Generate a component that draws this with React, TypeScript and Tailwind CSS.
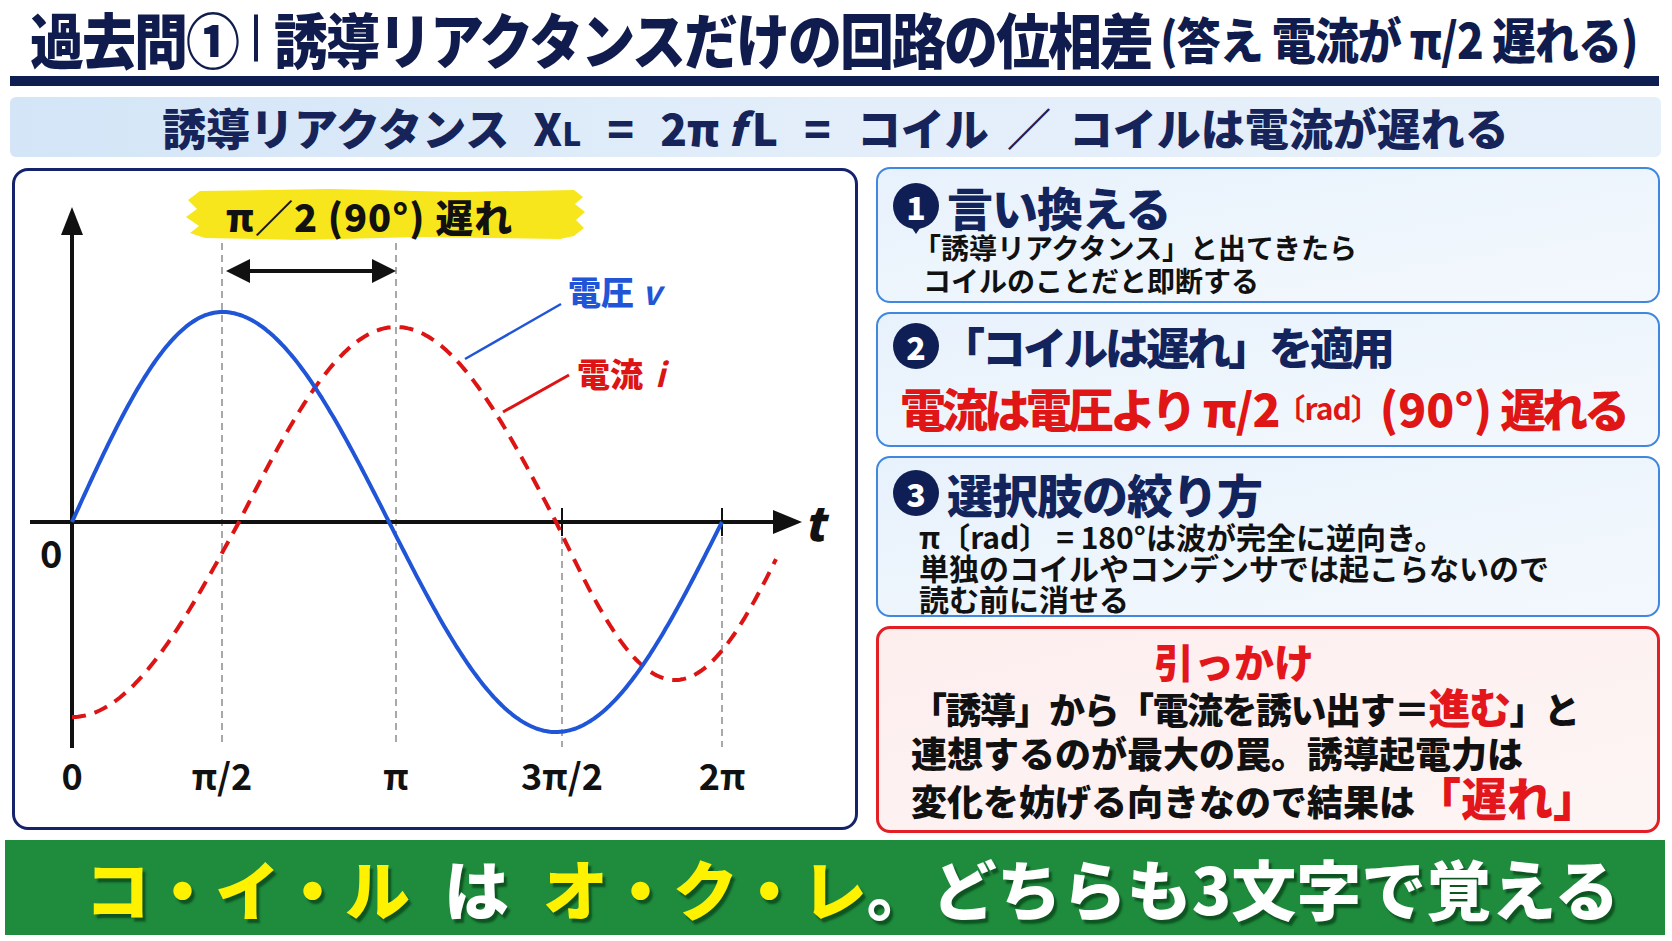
import React from 'react';

const BLUE_KEYS = [72, 222, 389, 556, 722];
const RED_KEYS = [72, 239, 396, 556, 675];
const AXIS_Y = 521;

// x -> phase, piecewise linear between quarter-period key points
const phaseAt = (x: number, keys: number[], phase0: number) => {
  let i = 0;
  while (i < keys.length - 2 && x > keys[i + 1]) i++;
  return phase0 + (i + (x - keys[i]) / (keys[i + 1] - keys[i])) * (Math.PI / 2);
};

const wavePath = (
  keys: number[],
  phase0: number,
  xStart: number,
  xEnd: number,
  amp: (p: number) => number,
) => {
  const pts: string[] = [];
  for (let x = xStart; x <= xEnd; x += 2) {
    const p = phaseAt(x, keys, phase0);
    const y = AXIS_Y - amp(p) * Math.sin(p);
    pts.push(`${x.toFixed(1)},${y.toFixed(1)}`);
  }
  return 'M' + pts.join(' L');
};

const bluePath = wavePath(BLUE_KEYS, 0, 72, 722, () => 210);
const redPath = wavePath(RED_KEYS, -Math.PI / 2, 72, 776, (p) => (p < Math.PI ? 195 : 158));

const Chart = () => (
  <svg viewBox="15 170 840 656" className="block w-full h-full">
    {/* brush highlight */}
    <path
      d="M200,190 L330,188 L460,191 L574,189 L583,196 L575,203 L585,211 L576,219 L584,227 L574,235 L560,238 L420,236 L300,239 L205,237 L190,232 L199,225 L186,216 L197,208 L188,199 Z"
      fill="#f7e61b"
    />
    <text x="226" y="231" fontSize="38" fontWeight="900" fill="#111" letterSpacing="1">
      π／2 (90°) 遅れ
    </text>

    {/* guide lines */}
    <g stroke="#a8a8a8" strokeWidth="2" strokeDasharray="7 5">
      <line x1="222" y1="242" x2="222" y2="746" />
      <line x1="396" y1="242" x2="396" y2="746" />
      <line x1="562" y1="524" x2="562" y2="746" />
      <line x1="722" y1="524" x2="722" y2="746" />
    </g>

    {/* phase difference arrow */}
    <line x1="244" y1="270" x2="378" y2="270" stroke="#111" strokeWidth="4" />
    <polygon points="226,270 250,258 250,282" fill="#111" />
    <polygon points="396,270 372,258 372,282" fill="#111" />

    {/* axes */}
    <line x1="72" y1="747" x2="72" y2="228" stroke="#111" strokeWidth="4" />
    <polygon points="72,206 61,234 83,234" fill="#111" />
    <line x1="30" y1={AXIS_Y} x2="780" y2={AXIS_Y} stroke="#111" strokeWidth="4" />
    <polygon points="802,521 773,509 773,533" fill="#111" />
    <line x1="562" y1="507" x2="562" y2="535" stroke="#111" strokeWidth="2" />
    <line x1="722" y1="507" x2="722" y2="535" stroke="#111" strokeWidth="2" />

    {/* waves */}
    <path d={redPath} fill="none" stroke="#dc1414" strokeWidth="4" strokeDasharray="14 9" />
    <path d={bluePath} fill="none" stroke="#1f55d6" strokeWidth="4" strokeLinejoin="round" />

    {/* leaders + labels */}
    <line x1="561" y1="303" x2="465" y2="358" stroke="#1f55d6" strokeWidth="2.5" />
    <line x1="569" y1="374" x2="503" y2="411" stroke="#dc1414" strokeWidth="3" />
    <text x="568" y="304" fontSize="33" fontWeight="900" fill="#1f55d6">
      電圧<tspan dx="8" fontStyle="italic" fontWeight="700">v</tspan>
    </text>
    <text x="577" y="386" fontSize="33" fontWeight="900" fill="#dc1414">
      電流<tspan dx="12" fontStyle="italic" fontWeight="700">i</tspan>
    </text>

    <text x="804" y="540" fontSize="46" fontWeight="900" fontStyle="italic" fill="#111">
      t
    </text>
    <text x="40" y="567" fontSize="38" fontWeight="700" fill="#111">
      0
    </text>

    <g fontSize="36" fontWeight="700" fill="#111" textAnchor="middle">
      <text x="72" y="789">0</text>
      <text x="222" y="789">π/2</text>
      <text x="396" y="789">π</text>
      <text x="562" y="789">3π/2</text>
      <text x="722" y="789">2π</text>
    </g>
  </svg>
);

const NumBadge = ({ n, tail = false }: { n: string; tail?: boolean }) => (
  <div className="relative flex items-center justify-center w-[46px] h-[46px] shrink-0 rounded-full bg-[#0f1f55] text-white text-[32px] font-black leading-none">
    {n}
    {tail && (
      <span className="absolute left-1/2 -translate-x-1/2 top-[42px] w-0 h-0 border-l-[6px] border-r-[6px] border-t-[9px] border-l-transparent border-r-transparent border-t-[#0f1f55]" />
    )}
  </div>
);

export default function App() {
  return (
    <div className="w-[1672px] h-[941px] bg-white overflow-hidden font-['Noto_Sans_CJK_JP','Noto_Sans',sans-serif] text-[#111]">
      {/* title */}
      <div className="h-[76px] flex items-center pl-[30px] text-[#0f1c4d] font-black whitespace-nowrap scale-y-[1.12] origin-center">
        <span className="text-[54px] tracking-[-2px] leading-[1.1]">過去問①</span>
        <span className="w-[4px] h-[42px] bg-[#0f1c4d] mx-[16px]" />
        <span className="text-[54px] tracking-[-2px] leading-[1.1]">誘導リアクタンスだけの回路の位相差</span>
        <span className="text-[44px] tracking-[-1px] leading-[1.1] ml-[8px]">(答え 電流が π/2 遅れる)</span>
      </div>
      <div className="h-[10px] ml-[10px] mr-[13px] bg-[#0f1e50]" />

      {/* formula band */}
      <div className="h-[60px] mt-[11px] ml-[10px] mr-[11px] rounded-md bg-gradient-to-r from-[#d3e5f7] via-[#e3eefa] to-[#e6f0fb] flex items-center justify-center text-[#16245a] font-black text-[44px] leading-none whitespace-nowrap">
        <span>誘導リアクタンス</span>
        <span className="ml-[24px]">X<span className="text-[32px]">L</span></span>
        <span className="mx-[26px]">=</span>
        <span>2π</span>
        <span className="italic ml-[8px]">f</span>
        <span className="ml-[7px]">L</span>
        <span className="mx-[26px]">=</span>
        <span>コイル</span>
        <span className="mx-[18px]">／</span>
        <span>コイルは電流が遅れる</span>
      </div>

      {/* main */}
      <div className="mt-[10px] h-[666px] flex gap-[18px] px-[12px]">
        <div className="w-[846px] h-[662px] mt-[1px] rounded-[16px] border-[3px] border-[#14236b] bg-white overflow-hidden">
          <Chart />
        </div>

        <div className="w-[784px] flex flex-col gap-[9px]">
          {/* 1 */}
          <div className="h-[136px] rounded-[14px] border-2 border-[#3f87df] bg-gradient-to-br from-[#e8f2fc] to-[#f3f8fd] pt-[13px] pl-[15px]">
            <div className="h-[48px] flex items-center gap-[8px]">
              <NumBadge n="1" tail />
              <span className="text-[46px] font-black leading-none text-[#13245c] tracking-[-1px]">言い換える</span>
            </div>
            <div className="mt-[1px] pl-[30px] text-[28px] font-bold leading-[33px] whitespace-nowrap">
              <div className="-ml-[10px]">「誘導リアクタンス」と出てきたら</div>
              <div>コイルのことだと即断する</div>
            </div>
          </div>

          {/* 2 */}
          <div className="h-[135px] rounded-[14px] border-2 border-[#3f87df] bg-gradient-to-br from-[#e8f2fc] to-[#f3f8fd] pt-[9px] pl-[15px]">
            <div className="h-[46px] flex items-center gap-[2px]">
              <NumBadge n="2" />
              <span className="text-[44px] font-black leading-none text-[#13245c] tracking-[-3px]">「コイルは遅れ」を適用</span>
            </div>
            <div className="mt-[13px] ml-[7px] h-[50px] flex items-center text-[#e01616] font-black text-[46px] leading-none whitespace-nowrap [text-shadow:0_0_2px_#fff]">
              <span className="tracking-[-4px]">電流は電圧より</span>
              <span className="ml-[10px] tracking-[-1px]">π/2</span>
              <span className="-mx-[4px] text-[30px] font-bold tracking-[-1px]">〔rad〕</span>
              <span className="ml-[4px]">(90°)</span>
              <span className="ml-[8px] tracking-[-4px]">遅れる</span>
            </div>
          </div>

          {/* 3 */}
          <div className="h-[161px] rounded-[14px] border-2 border-[#3f87df] bg-gradient-to-br from-[#e8f2fc] to-[#f3f8fd] pt-[12px] pl-[15px]">
            <div className="h-[46px] flex items-center gap-[8px]">
              <NumBadge n="3" />
              <span className="text-[46px] font-black leading-none text-[#13245c] tracking-[-1px]">選択肢の絞り方</span>
            </div>
            <div className="mt-[5px] pl-[26px] text-[30px] font-bold leading-[31px] whitespace-nowrap">
              <div>π〔rad〕 = 180°は波が完全に逆向き。</div>
              <div>単独のコイルやコンデンサでは起こらないので</div>
              <div>読む前に消せる</div>
            </div>
          </div>

          {/* trap */}
          <div className="h-[207px] rounded-[14px] border-[3px] border-[#e31e24] bg-gradient-to-br from-[#fdeeee] to-[#fdf5f5] pt-[12px] pl-[32px]">
            <div className="pl-[243px] text-[40px] font-black leading-[40px] text-[#e3161b]">引っかけ</div>
            <div className="mt-[3px] text-[36px] font-black leading-[44px] whitespace-nowrap">
              <div className="tracking-[-1.5px]">
                「誘導」から「電流を誘い出す＝<span className="text-[#e3161b] text-[42px]">進む</span>」と
              </div>
              <div>連想するのが最大の罠。誘導起電力は</div>
              <div>
                変化を妨げる向きなので結果は<span className="text-[#e3161b] text-[46px]">「遅れ」</span>
              </div>
            </div>
          </div>
        </div>
      </div>

      {/* bottom band */}
      <div className="mt-[7px] ml-[5px] mr-[7px] h-[95px] bg-[#1e8b3d] flex items-center pl-[80px] font-black text-[65px] leading-none whitespace-nowrap [text-shadow:3px_4px_2px_rgba(0,40,10,0.55)]">
        <span className="text-[#fff200]">コ・イ・ル</span>
        <span className="text-white ml-[34px]">は</span>
        <span className="text-[#fff200] ml-[34px]">オ・ク・レ</span>
        <span className="text-white">。どちらも3文字で覚える</span>
      </div>
    </div>
  );
}
